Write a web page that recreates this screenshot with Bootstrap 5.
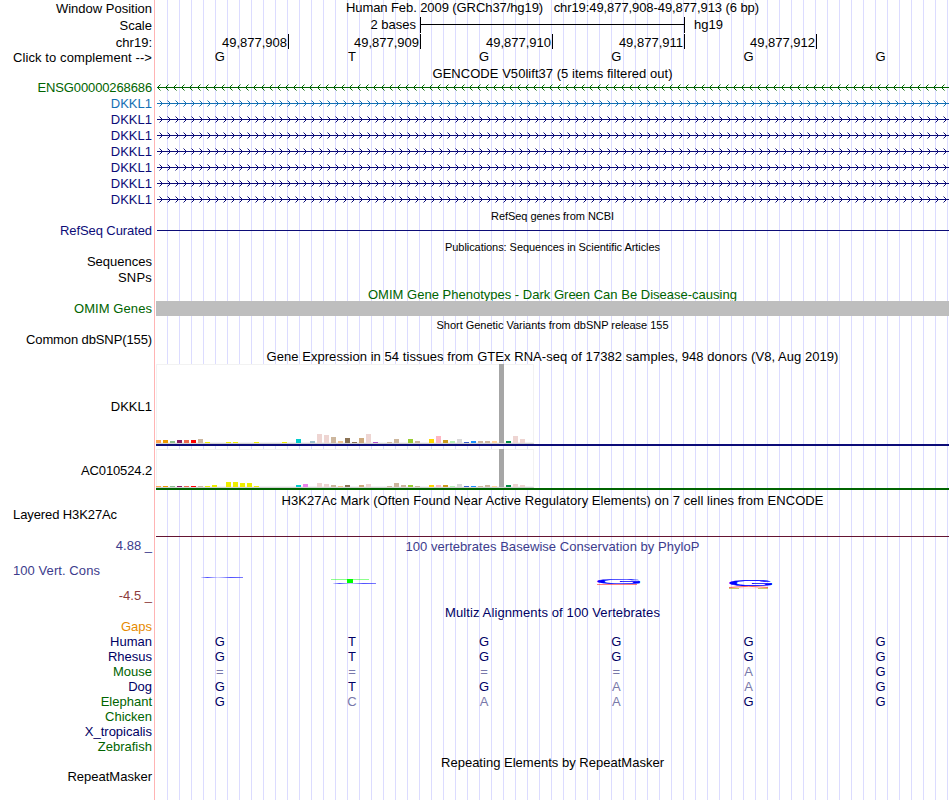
<!DOCTYPE html>
<html lang="en">
<head>
  <meta charset="UTF-8" />
  <meta name="viewport" content="width=device-width, initial-scale=1.0"/>
  <title>chr19:49,877,908-49,877,913 - Genome Browser</title>
  <link href="https://cdn.jsdelivr.net/npm/bootstrap@5.3.0/dist/css/bootstrap.min.css" rel="stylesheet"/>
  <style>
    body {
      background-color: #fff;
      color: #000;
      font-family: "Liberation Sans", Arial, sans-serif;
      font-size: 13px;
      line-height: 17px;
      overflow: hidden;
    }

    .browser {
      width: 949px;
      height: 800px;
    }

    .track-label {
      width: 155px;
      margin-right: 1px;
      padding-right: 2px;
      border-right: 1px solid #ffb4b4;
      white-space: nowrap;
    }

    .track-label.left-side {
      padding-left: 13px;
    }

    /* guide lines every 12px */
    .track-data {
      width: 793px;
      background: linear-gradient(to right, transparent 11px, #dcdcff 11px) 0 0 / 12px 100%;
      white-space: nowrap;
    }

    .track-data svg {
      display: block;
      overflow: visible;
      flex-shrink: 0;
    }

    .small-title {
      font-size: 11px;
    }

    .nudge-up {
      margin-top: -1px;
    }

    .nudge-down {
      padding-top: 1px;
    }

    .base-row {
      width: 793px;
      margin-left: -2.3px;
    }

    .scale-text {
      width: 260px;
    }

    .scale-bar {
      width: 265px;
      height: 16px;
      border-left: 1px solid #000;
      border-right: 1px solid #000;
      margin-left: 4px;
      margin-right: 9px;
      background: linear-gradient(#000, #000) 0 7px / 100% 1px no-repeat;
    }

    .tick {
      width: 132px;
      height: 15px;
      border-right: 1px solid #000;
      padding-right: 1px;
    }

    .tick:first-child {
      width: 133px;
    }

    .omim-bar {
      height: 15px;
      margin-top: 1px;
      background-color: #bebebe;
    }

    .c-navy { color: #0c0c78; }
    .c-dark { color: #000064; }
    .c-green { color: #006400; }
    .c-blue { color: #1470b4; }
    .c-orange { color: #e68a00; }
    .c-cons { color: #3c3c8c; }
    .c-neg { color: #8c3c3c; }
    .c-faint { color: #7878aa; }
  </style>
</head>
<body>

  <div class="browser d-flex flex-column" id="browser"></div>

  <script>
    // bar colours and heights by tissue, [index, colour, DKKL1, AC010524.2]
    const tissues = [
      [0, "#ffa54f", 3, 1], [1, "#ee9a00", 3, 1], [2, "#8fbc8f", 2, 1], [3, "#8b1c62", 3, 1],
      [4, "#ee6a50", 3, 1], [5, "#ff0000", 3, 1], [6, "#cdb79e", 4, 1], [7, "#eeee00", 1, 1],
      [8, "#eeee00", 0, 2], [10, "#eeee00", 1, 5], [11, "#eeee00", 1, 5], [12, "#eeee00", 0, 4],
      [13, "#eeee00", 0, 4], [14, "#eeee00", 1, 1], [18, "#eeee00", 1, 0], [20, "#00cdcd", 4, 2],
      [21, "#ee82ee", 0, 3], [22, "#9ac0cd", 2, 0], [23, "#eed5d2", 9, 4], [24, "#eed5d2", 8, 3],
      [25, "#cdb79e", 6, 2], [26, "#eec591", 2, 1], [27, "#8b7355", 5, 2], [28, "#8b7355", 1, 0],
      [29, "#cdaa7d", 5, 2], [30, "#eed5d2", 9, 3], [31, "#b452cd", 1, 0], [33, "#cdb79e", 1, 1],
      [34, "#cdb79e", 4, 4], [35, "#cdb79e", 0, 2], [36, "#9acd32", 4, 2], [37, "#cdb79e", 2, 1],
      [39, "#ffd700", 4, 2], [40, "#ffb6c1", 7, 2], [41, "#cd9b1d", 3, 2], [42, "#b4eeb4", 2, 1],
      [43, "#d9d9d9", 4, 3], [44, "#3a5fcd", 1, 1], [45, "#1e90ff", 2, 1], [46, "#cdb79e", 2, 1],
      [47, "#cdb79e", 2, 2], [48, "#ffd39b", 2, 1], [49, "#a6a6a6", 79, 38], [50, "#008b45", 2, 2],
      [51, "#eed5d2", 7, 3], [52, "#eed5d2", 4, 2]
    ];

    function title(text, cls = "", width = 0) {
      return `<div class="text-center w-100 ${cls}">${fit(text, width)}</div>`;
    }

    // spread or tighten the letters until the text takes the given width
    function fit(text, width) {
      return width ? `<span data-width="${width}">${text}</span>` : text;
    }

    function bases(letters) {
      return `<div class="base-row d-flex">` + [...letters].map(b => {
        const faint = b === "=" || b.toLowerCase() === b;
        return `<div class="flex-fill text-center ${faint ? "c-faint" : ""}" style="width:${100 / 6}%">${b.toUpperCase()}</div>`;
      }).join("") + `</div>`;
    }

    function geneLine(color, dir) {
      let d = "";
      for (let k = 0; k < 99; k++) {
        const tip = (dir > 0 ? 6.5 : 1.5) + 8 * k;
        d += `M${tip - 3 * dir} 5.5L${tip} 8.5L${tip - 3 * dir} 11.5`;
      }
      return `<svg width="793" height="16" stroke="${color}" fill="none">
        <path d="M1 8.5H793"/><path d="${d}"/></svg>`;
    }

    function expression(col, height, color) {
      const bars = tissues.filter(t => t[col]).map(t =>
        `<rect x="${t[0] * 7}" y="${height - t[col]}" width="5" height="${t[col]}" fill="${t[1]}"/>`).join("");
      return `<svg width="793" height="${height + 3}" shape-rendering="crispEdges">
        <rect width="378" height="${height + 1}" fill="#fff"/>
        <path d="M.5 ${height}V.5H377.5V${height - .5}H0" fill="none" stroke="#f2f2f2"/>
        <rect y="${height}" width="378" height="1" fill="#d2d2d2"/>${bars}
        <rect y="${height + 1}" width="793" height="2" fill="${color}"/></svg>`;
    }

    // letters are stretched wide, with height following the score
    function logoLetter(ch, x, base, sy, color) {
      return `<text transform="translate(${x} ${base}) scale(1 ${sy})" font-size="63" fill="${color}" stroke="${color}" stroke-width="1.5">${ch}</text>`;
    }

    const logo = `<svg width="793" height="50">
      <defs><linearGradient id="fade" x1="0" x2="1">
        <stop offset="0" stop-color="#00f" stop-opacity=".1"/><stop offset=".15" stop-color="#22f" stop-opacity=".8"/>
        <stop offset=".4" stop-color="#88f" stop-opacity=".4"/><stop offset=".7" stop-color="#22f" stop-opacity=".8"/>
        <stop offset="1" stop-color="#22f" stop-opacity=".6"/></linearGradient></defs>
      <rect x="45" y="23" width="42" height="1" fill="url(#fade)"/>
      <rect x="175" y="25" width="38" height="1" fill="#0f0" opacity=".45"/>
      <rect x="191" y="25" width="6" height="4" fill="#0f0"/>
      <rect x="177" y="29" width="43" height="1" fill="url(#fade)"/>
      <rect x="441" y="30" width="40" height="1" fill="#f00" opacity=".5"/>
      ${logoLetter("G", 438.8, 30, .115, "#00f")}
      <path d="M573 33.5Q593 31 612 33.5" fill="none" stroke="#f00" stroke-width=".8" opacity=".8"/>
      <path d="M573 34.5H583M602 34.5H612" stroke="#aa0" opacity=".6"/>
      <path d="M583 34H602" stroke="#fa8" opacity=".3"/>
      ${logoLetter("G", 570.8, 31.8, .148, "#00f")}</svg>`;

    const gene = (name, cls, color, dir, width) => [16, `<div class="${cls}">${fit(name, width)}</div>`, geneLine(color, dir)];
    const species = (name, cls, letters) => [15, `<div class="${cls}">${name}</div>`, letters ? `<div class="c-dark">${bases(letters)}</div>` : ""];

    // each row: height, label, track content, extra label class
    const rows = [
      [17, "Window Position", title("Human Feb. 2009 (GRCh37/hg19) &nbsp; chr19:49,877,908-49,877,913 (6 bp)", "nudge-up", 413)],
      [17, "Scale", `<div class="d-flex"><div class="scale-text text-end nudge-up">2 bases</div><div class="scale-bar"></div><div class="nudge-up">hg19</div></div>`],
      [15, "chr19:", `<div class="d-flex">` + [908, 909, 910, 911, 912].map(n => `<div class="tick text-end">49,877,${n}</div>`).join("") + `</div>`],
      [16, fit("Click to complement --&gt;", 139), `<div class="nudge-up">${bases("GTGGGG")}</div>`],
      [14, "", title("GENCODE V50lift37 (5 items filtered out)", "", 240)],
      gene("ENSG00000268686", "c-green", "#006400", -1, 114.5),
      gene("DKKL1", "c-blue", "#1470b4", 1),
      ...Array.from({ length: 6 }, () => gene("DKKL1", "c-navy", "#0c0c78", 1)),
      [15, "", title("RefSeq genes from NCBI", "small-title nudge-down", 123)],
      [16, `<div class="c-navy">${fit("RefSeq Curated", 92)}</div>`, `<svg width="793" height="16"><path d="M1 8.5H793" stroke="#0c0c78"/></svg>`],
      [15, "", title("Publications: Sequences in Scientific Articles", "small-title nudge-down", 215)],
      [16, "Sequences", ""],
      [16, fit("SNPs", 34), ""],
      [15, "", title("OMIM Gene Phenotypes - Dark Green Can Be Disease-causing", "c-green nudge-down", 369)],
      [16, `<div class="c-green">${fit("OMIM Genes", 78)}</div>`, `<div class="omim-bar w-100 position-relative"></div>`],
      [15, "", title("Short Genetic Variants from dbSNP release 155", "small-title nudge-down", 232)],
      [17, fit("Common dbSNP(155)", 126), ""],
      [16, "", title("Gene Expression in 54 tissues from GTEx RNA-seq of 17382 samples, 948 donors (V8, Aug 2019)", "", 572)],
      [85, `<div style="padding-top:34px">DKKL1</div>`, expression(2, 79, "#0c0c78")],
      [43, `<div style="padding-top:13px">${fit("AC010524.2", 71)}</div>`, expression(3, 38, "#006400")],
      [14, "", title("H3K27Ac Mark (Often Found Near Active Regulatory Elements) on 7 cell lines from ENCODE", "", 542)],
      [31, `<div class="text-start">${fit("Layered H3K27Ac", 104)}</div>`, `<svg width="793" height="31"><path d="M0 30.5H793" stroke="#641432"/></svg>`, "left-side"],
      [67, `<div class="c-cons">4.88 _</div><div class="c-cons text-start pt-2">${fit("100 Vert. Cons", 87)}</div><div class="c-neg pt-2">-4.5 _</div>`,
        `<div class="w-100"><div class="text-center c-cons position-relative" style="top:1px">${fit("100 vertebrates Basewise Conservation by PhyloP", 294)}</div>${logo}</div>`, "left-side"],
      [14, "", title("Multiz Alignments of 100 Vertebrates", "c-dark", 215)],
      species("Gaps", "c-orange"),
      species("Human", "c-dark", "GTGGGG"),
      species("Rhesus", "c-dark", "GTGGGG"),
      species("Mouse", "c-green", "====aG"),
      species("Dog", "c-dark", "GTGaaG"),
      species("Elephant", "c-green", "GcaaGG"),
      species("Chicken", "c-green"),
      species("X_tropicalis", "c-dark"),
      species("Zebrafish", "c-green"),
      [15, "", title("Repeating Elements by RepeatMasker", "nudge-down", 223)],
      [32, "RepeatMasker", ""]
    ];

    document.getElementById("browser").innerHTML = rows.map(([height, label, data, side]) =>
      `<div class="d-flex flex-shrink-0" style="height:${height}px">
        <div class="track-label text-end flex-shrink-0 ${side || ""}">${label}</div>
        <div class="track-data d-flex align-items-start flex-shrink-0">${data}</div>
      </div>`).join("");

    document.querySelectorAll("[data-width]").forEach(el => {
      const gap = (el.dataset.width - el.getBoundingClientRect().width) / el.textContent.length;
      el.style.letterSpacing = `${gap}px`;
    });
  </script>
  <script src="https://cdn.jsdelivr.net/npm/bootstrap@5.3.0/dist/js/bootstrap.bundle.min.js"></script>
</body>
</html>
